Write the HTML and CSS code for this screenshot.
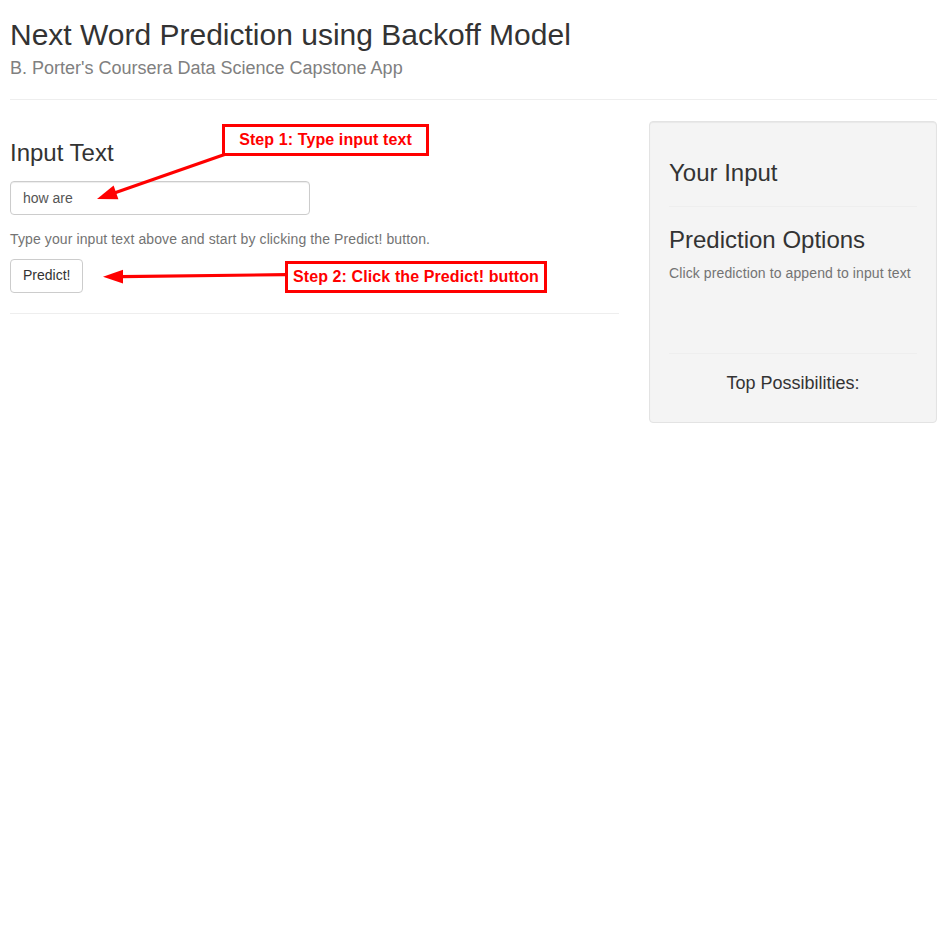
FILE: index.html
```html
<!DOCTYPE html>
<html lang="en">
<head>
<meta charset="utf-8">
<title>Next Word Prediction using Backoff Model</title>
<link rel="stylesheet" href="styles.css">
</head>
<body>
<div class="page">
  <header class="title-panel">
    <h2 class="title">Next Word Prediction using Backoff Model</h2>
    <h4 class="subtitle">B. Porter's Coursera Data Science Capstone App</h4>
  </header>
  <hr class="rule">
  <div class="row">
    <main class="main-panel">
      <h3 class="heading">Input Text</h3>
      <div class="form-group">
        <input class="form-control" type="text" value="how are">
      </div>
      <p class="help-block">Type your input text above and start by clicking the Predict! button.</p>
      <button class="btn" type="button">Predict!</button>
      <hr class="rule">
    </main>
    <aside class="well">
      <h3 class="heading">Your Input</h3>
      <hr class="rule">
      <h3 class="heading">Prediction Options</h3>
      <p class="help-block">Click prediction to append to input text</p>
      <div class="options"></div>
      <hr class="rule">
      <h4 class="possibilities">Top Possibilities:</h4>
    </aside>
  </div>

  <div class="annotations">
    <svg class="arrows" width="947" height="943" viewBox="0 0 947 943" aria-hidden="true">
      <line x1="226" y1="154" x2="115" y2="192.7" stroke="#ff0000" stroke-width="3.2"/>
      <polygon points="97,199 118.4,199.3 113.6,185.6" fill="#ff0000"/>
      <line x1="286" y1="274.6" x2="121" y2="276.7" stroke="#ff0000" stroke-width="3.2"/>
      <polygon points="103,276.8 123,269.8 123,283.6" fill="#ff0000"/>
    </svg>
    <div class="callout callout-1">Step 1: Type input text</div>
    <div class="callout callout-2">Step 2: Click the Predict! button</div>
  </div>
</div>
</body>
</html>
```

FILE: styles.css
```css
* {
  box-sizing: border-box;
}

html, body {
  margin: 0;
  padding: 0;
  background: #fff;
}

body {
  font-family: "Liberation Sans", Arial, Helvetica, sans-serif;
  font-size: 14px;
  line-height: 1.42857;
  color: #333;
}

.page {
  position: relative;
  padding: 0 10px;
  min-height: 943px;
}

.title-panel {
  padding-top: 18px;
}

.title {
  margin: 0 0 8px;
  font-size: 30px;
  font-weight: 400;
  line-height: 1.1;
  color: #333;
}

.subtitle {
  margin: 0;
  font-size: 18px;
  font-weight: 400;
  line-height: 1.1;
  color: #808080;
}

.rule {
  margin: 20px 0;
  border: 0;
  border-top: 1px solid #eee;
  height: 0;
}

.row {
  display: grid;
  grid-template-columns: calc((100% + 30px) * 2 / 3 - 29px) 1fr;
  column-gap: 30px;
  align-items: start;
}

.main-panel {
  display: flow-root;
}

.heading {
  margin: 20px 0 10px;
  font-size: 24px;
  font-weight: 400;
  line-height: 1.1;
  color: #333;
}

.form-group {
  margin: 15px 0 15px;
}

.form-control {
  display: block;
  width: 300px;
  height: 34px;
  margin: 0;
  padding: 6px 12px;
  font-family: inherit;
  font-size: 14px;
  line-height: 1.42857;
  color: #555;
  background: #fff;
  border: 1px solid #ccc;
  border-radius: 4px;
  box-shadow: inset 0 1px 1px rgba(0, 0, 0, 0.075);
}

.help-block {
  margin: 1px 0 9px;
  color: #737373;
  letter-spacing: 0.11px;
}

.well .help-block {
  margin: 0 0 10px;
}

.btn {
  display: inline-block;
  height: 34px;
  margin: 0;
  padding: 6px 12px;
  font-family: inherit;
  font-size: 14px;
  line-height: 1.42857;
  color: #333;
  background: #fff;
  border: 1px solid #ccc;
  border-radius: 4px;
  vertical-align: top;
}

.well {
  margin-top: 1px;
  padding: 0 19px;
  background: #f4f4f4;
  border: 1px solid #e3e3e3;
  border-radius: 4px;
  box-shadow: inset 0 1px 1px rgba(0, 0, 0, 0.05);
  display: flow-root;
}

.well > .heading:first-child {
  margin-top: 38px;
}

.options {
  height: 39px;
}

.possibilities {
  margin: 20px 0 29px;
  font-size: 18px;
  font-weight: 400;
  line-height: 1.1;
  text-align: center;
  color: #333;
}

.annotations {
  position: absolute;
  inset: 0;
  pointer-events: none;
}

.arrows {
  position: absolute;
  left: 0;
  top: 0;
}

.callout {
  position: absolute;
  display: flex;
  align-items: center;
  justify-content: center;
  border: 3px solid #ff0000;
  background: #fff;
  color: #ff0000;
  font-family: "Liberation Sans", Arial, sans-serif;
  font-weight: 700;
  font-size: 16px;
  line-height: 1;
  letter-spacing: 0.1px;
  white-space: nowrap;
}

.callout-1 {
  left: 222px;
  top: 124px;
  width: 207px;
  height: 32px;
}

.callout-2 {
  left: 285px;
  top: 261px;
  width: 262px;
  height: 32px;
}
```
